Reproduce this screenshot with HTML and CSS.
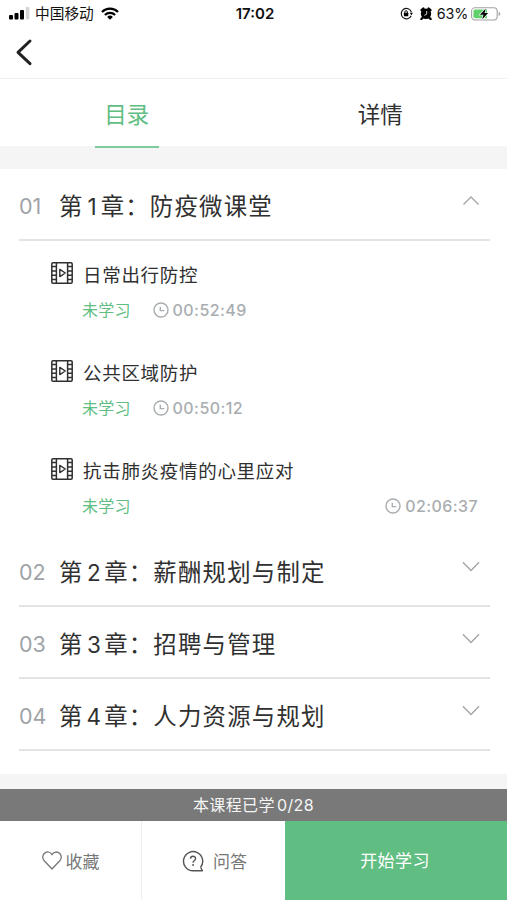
FILE: index.html
```html
<!DOCTYPE html>
<html lang="zh-CN">
<head>
<meta charset="utf-8">
<title>课程目录</title>
<link rel="stylesheet" href="styles.css">
</head>
<body>
<svg width="0" height="0" class="sprite" aria-hidden="true">
  <symbol id="film" viewBox="0 0 22 22">
    <g fill="none" stroke="#303030" stroke-width="1.5">
      <rect x=".8" y=".8" width="20.4" height="20.4" rx="1.2"/>
      <path d="M5.4 1v20M16.6 1v20M1 4.6h4.4M1 9h4.4M1 13.2h4.4M1 17.4h4.4M16.6 4.6H21M16.6 9H21M16.6 13.2H21M16.6 17.4H21"/>
      <path d="M8.8 7.400v7.200l5.500-3.600z" stroke-linejoin="round" stroke-width="1.4"/>
    </g>
  </symbol>
  <symbol id="clock" viewBox="0 0 16 16">
    <g fill="none" stroke="#a9adb0" stroke-width="1.4">
      <circle cx="8" cy="8" r="7"/>
      <path d="M7.3 4.8v3.8h4"/>
    </g>
  </symbol>
  <symbol id="down" viewBox="0 0 18 11">
    <path d="M.9 1.2 9 9.5l8.1-8.3" fill="none" stroke="#a3a6aa" stroke-width="1.4"/>
  </symbol>
  <symbol id="up" viewBox="0 0 18 11">
    <path d="M1.5 9.5 9 2l7.5 7.5" fill="none" stroke="#a3a6aa" stroke-width="1.4"/>
  </symbol>
</svg>

<header class="status">
  <div class="status-side">
    <svg class="signal" width="22" height="13" viewBox="0 0 22 13">
      <rect x="0" y="8" width="4" height="4.5" rx="1"/>
      <rect x="5.5" y="6" width="4" height="6.5" rx="1"/>
      <rect x="11" y="3" width="4" height="9.5" rx="1"/>
      <rect x="16.8" y="0" width="3.6" height="12.5" rx="1" fill="#d4d4d4"/>
    </svg>
    <span class="carrier">中国移动</span>
    <svg width="18" height="13" viewBox="0 0 18 13">
      <path d="M1 5a11.4 11.4 0 0 1 16 0M3.9 8a7.3 7.3 0 0 1 10.2 0" fill="none" stroke="#000" stroke-width="2.3"/>
      <path d="M9 12.8 6.1 10a4.2 4.2 0 0 1 5.8 0z"/>
    </svg>
  </div>
  <div class="clock-time">17:02</div>
  <div class="status-side status-right">
    <svg width="13" height="13" viewBox="0 0 13 13">
      <path d="M11.2 8.8A5.2 5.2 0 1 1 11.4 5" fill="none" stroke="#111" stroke-width="1.2"/>
      <path d="M9.8 5.8h3.1l-1.5 2.4z"/>
      <rect x="3.9" y="5.7" width="4.4" height="3.5" rx=".5"/>
      <path d="M4.8 6V5a1.3 1.3 0 0 1 2.6 0v1" fill="none" stroke="#111"/>
    </svg>
    <svg class="alarm" width="12" height="13" viewBox="0 0 12 13">
      <circle cx="6" cy="6.8" r="5.2"/>
      <path d="M1.6 3.2 3.4 1.5M10.4 3.2 8.6 1.5M2.4 11l-1 1M9.6 11l1 1" stroke="#000" stroke-width="2.4" stroke-linecap="round"/>
      <path d="M6.7 4v3.2L4.3 8.4" fill="none" stroke="#fff" stroke-width=".8"/>
    </svg>
    <span class="percent">63%</span>
    <svg class="battery" width="30" height="14" viewBox="0 0 30 14">
      <rect x=".6" y=".8" width="25.6" height="12.2" rx="3.4" fill="#fff" stroke="#a2a2a2" stroke-width="1.1"/>
      <path d="M4.2 2.6H16v8.6H4.2a1.8 1.8 0 0 1-1.8-1.8v-5a1.8 1.8 0 0 1 1.8-1.8z" fill="#5fd06c"/>
      <path d="M27.6 4.8q1.8.6 1.8 2.1t-1.8 2.1z" fill="#aaa"/>
      <path d="M14.8 1.4 8.9 7.7h3.6l-1.4 4.9 6-6.5h-3.6z" stroke="#fff" stroke-width="1.2" paint-order="stroke"/>
    </svg>
  </div>
</header>

<nav class="navbar">
  <svg width="18" height="28" viewBox="0 0 18 28">
    <path d="M15 3 3 14.3 15 25.6" fill="none" stroke="#222" stroke-width="3" stroke-linecap="round" stroke-linejoin="round"/>
  </svg>
</nav>

<div class="tabs">
  <div class="tab"><span class="tab-label active">目录</span></div>
  <div class="tab"><span class="tab-label">详情</span></div>
</div>

<main class="catalog">
  <section class="chapter">
    <span class="num">01</span>
    <h2 class="title">第<span class="digit one">1</span>章：防疫微课堂</h2>
    <svg class="arrow" width="18" height="11"><use href="#up"/></svg>
  </section>
  <ul class="lessons">
    <li class="lesson">
      <div class="lesson-head"><svg width="22" height="22"><use href="#film"/></svg><span class="lesson-name">日常出行防控</span></div>
      <div class="meta"><span class="state">未学习</span><span class="duration"><svg width="16" height="16"><use href="#clock"/></svg>00:52:49</span></div>
    </li>
    <li class="lesson">
      <div class="lesson-head"><svg width="22" height="22"><use href="#film"/></svg><span class="lesson-name">公共区域防护</span></div>
      <div class="meta"><span class="state">未学习</span><span class="duration"><svg width="16" height="16"><use href="#clock"/></svg>00:50:12</span></div>
    </li>
    <li class="lesson">
      <div class="lesson-head"><svg width="22" height="22"><use href="#film"/></svg><span class="lesson-name">抗击肺炎疫情的心里应对</span></div>
      <div class="meta spread"><span class="state">未学习</span><span class="duration"><svg width="16" height="16"><use href="#clock"/></svg>02:06:37</span></div>
    </li>
  </ul>
  <section class="chapter">
    <span class="num">02</span>
    <h2 class="title">第<span class="digit">2</span>章：薪酬规划与制定</h2>
    <svg class="arrow" width="18" height="11"><use href="#down"/></svg>
  </section>
  <section class="chapter">
    <span class="num">03</span>
    <h2 class="title">第<span class="digit">3</span>章：招聘与管理</h2>
    <svg class="arrow" width="18" height="11"><use href="#down"/></svg>
  </section>
  <section class="chapter">
    <span class="num">04</span>
    <h2 class="title">第<span class="digit">4</span>章：人力资源与规划</h2>
    <svg class="arrow" width="18" height="11"><use href="#down"/></svg>
  </section>
</main>

<footer class="bottom">
  <div class="progress">本课程已学<span class="count">0/28</span></div>
  <div class="actions">
    <div class="action">
      <svg width="20" height="19" viewBox="0 0 20 19">
        <path d="M10 18 2.2 9.8C-.2 7 .6 3 3.4 1.6 6 .3 8.8 1.3 10 3.7 11.2 1.3 14 .3 16.6 1.6 19.4 3 20.2 7 17.8 9.800z" fill="none" stroke="#777" stroke-width="1.3" stroke-linejoin="round"/>
      </svg>
      <span>收藏</span>
    </div>
    <div class="action ask">
      <svg width="22" height="22" viewBox="0 0 22 22">
        <path d="M18.6 17.2A9.600 9.600 0 1 0 11 20.800h9.400l-1.800-3.600" fill="none" stroke="#555" stroke-width="1.4" stroke-linejoin="round"/>
        <path d="M8.5 8.8c0-3.300 5.100-3.300 5.100-.2 0 1.900-2.500 1.900-2.500 4.100" fill="none" stroke="#555" stroke-width="1.4"/>
        <circle cx="11.1" cy="15" r=".95" fill="#555"/>
      </svg>
      <span>问答</span>
    </div>
    <div class="start">开始学习</div>
  </div>
</footer>
</body>
</html>
```
FILE: styles.css
```css
* { box-sizing: border-box; margin: 0; padding: 0; }

body {
  width: 507px;
  height: 900px;
  overflow: hidden;
  display: flex;
  flex-direction: column;
  background: #f5f5f5;
  color: #303030;
  font-family: Inter, "Noto Sans CJK SC", sans-serif;
}

svg { display: block; flex: none; }
.sprite { position: absolute; }

.status {
  height: 27px;
  display: grid;
  grid-template-columns: 1fr auto 1fr;
  align-items: center;
  padding: 0 6px 0 9px;
  background: #fff;
  color: #111;
}
.status-side { display: flex; align-items: center; }
.status-right { justify-content: flex-end; }
.carrier { font-size: 14.7px; line-height: 20px; margin: 0 7px 0 4px; white-space: nowrap; }
.clock-time { font-size: 15px; font-weight: 600; line-height: 20px; }
.alarm { margin: 0 5px 0 7px; }
.percent { font-size: 14.3px; letter-spacing: -.2px; line-height: 20px; }
.battery { margin-left: 3px; }

.navbar {
  height: 52px;
  padding: 11px 0 0 15px;
  background: #fff;
  border-bottom: 1px solid #f0f0f0;
}

.tabs { height: 67px; display: flex; background: #fff; }
.tab { flex: 1; display: flex; justify-content: center; }
.tab-label {
  width: 64px;
  height: 69px;
  text-align: center;
  font-size: 22.5px;
  line-height: 71px;
  white-space: nowrap;
}
.active { color: #60be82; border-bottom: 2px solid #7fcb9b; }

.catalog { height: 605px; margin-top: 23px; padding: 0 17px 0 19px; background: #fff; }

.chapter {
  height: 72px;
  display: flex;
  align-items: flex-start;
  border-bottom: 2px solid #e3e4e4;
}
.num { width: 40px; font-size: 21.5px; line-height: 74px; color: #a0a3a7; }
.title {
  font-size: 23.4px;
  font-weight: 400;
  letter-spacing: 1.23px;
  line-height: 75px;
  white-space: nowrap;
}
.digit { display: inline-block; width: 20.5px; font-size: 22.5px; line-height: 1; text-align: center; letter-spacing: 0; }
.one { width: 17px; }
.arrow { margin: 26px 10px 0 auto; }

.lessons { list-style: none; height: 294px; }
.lesson { height: 98px; padding: 21px 12px 0 32px; }
.lesson-head { display: flex; height: 26px; gap: 10px; }
.lesson-name {
  font-size: 18.5px;
  font-weight: 400;
  letter-spacing: .7px;
  line-height: 27px;
  white-space: nowrap;
}
.meta {
  display: flex;
  gap: 22px;
  margin: 12px 0 0 31px;
  font-size: 16px;
  line-height: 20px;
}
.spread { justify-content: space-between; }
.state { color: #60be82; white-space: nowrap; letter-spacing: .2px; }
.duration {
  display: flex;
  align-items: center;
  gap: 4px;
  color: #a9adb0;
  font-weight: 500;
  letter-spacing: .42px;
}

.bottom { margin-top: auto; }
.progress {
  height: 32px;
  background: #797979;
  color: #f5f5f5;
  font-size: 16px;
  letter-spacing: .4px;
  line-height: 32px;
  text-align: center;
}
.count { margin-left: 2px; }
.actions { height: 79px; display: flex; background: #fff; color: #777; font-size: 17px; }
.action {
  width: 142px;
  display: flex;
  align-items: center;
  justify-content: center;
  gap: 4px;
  border-right: 1px solid #eee;
}
.ask { gap: 9px; width: 143px; padding-left: 2px; border-right: 0; }
.start {
  flex: 1;
  padding-right: 2px;
  background: #60be82;
  color: #fff;
  font-size: 17px;
  letter-spacing: .4px;
  line-height: 80px;
  text-align: center;
}
```
